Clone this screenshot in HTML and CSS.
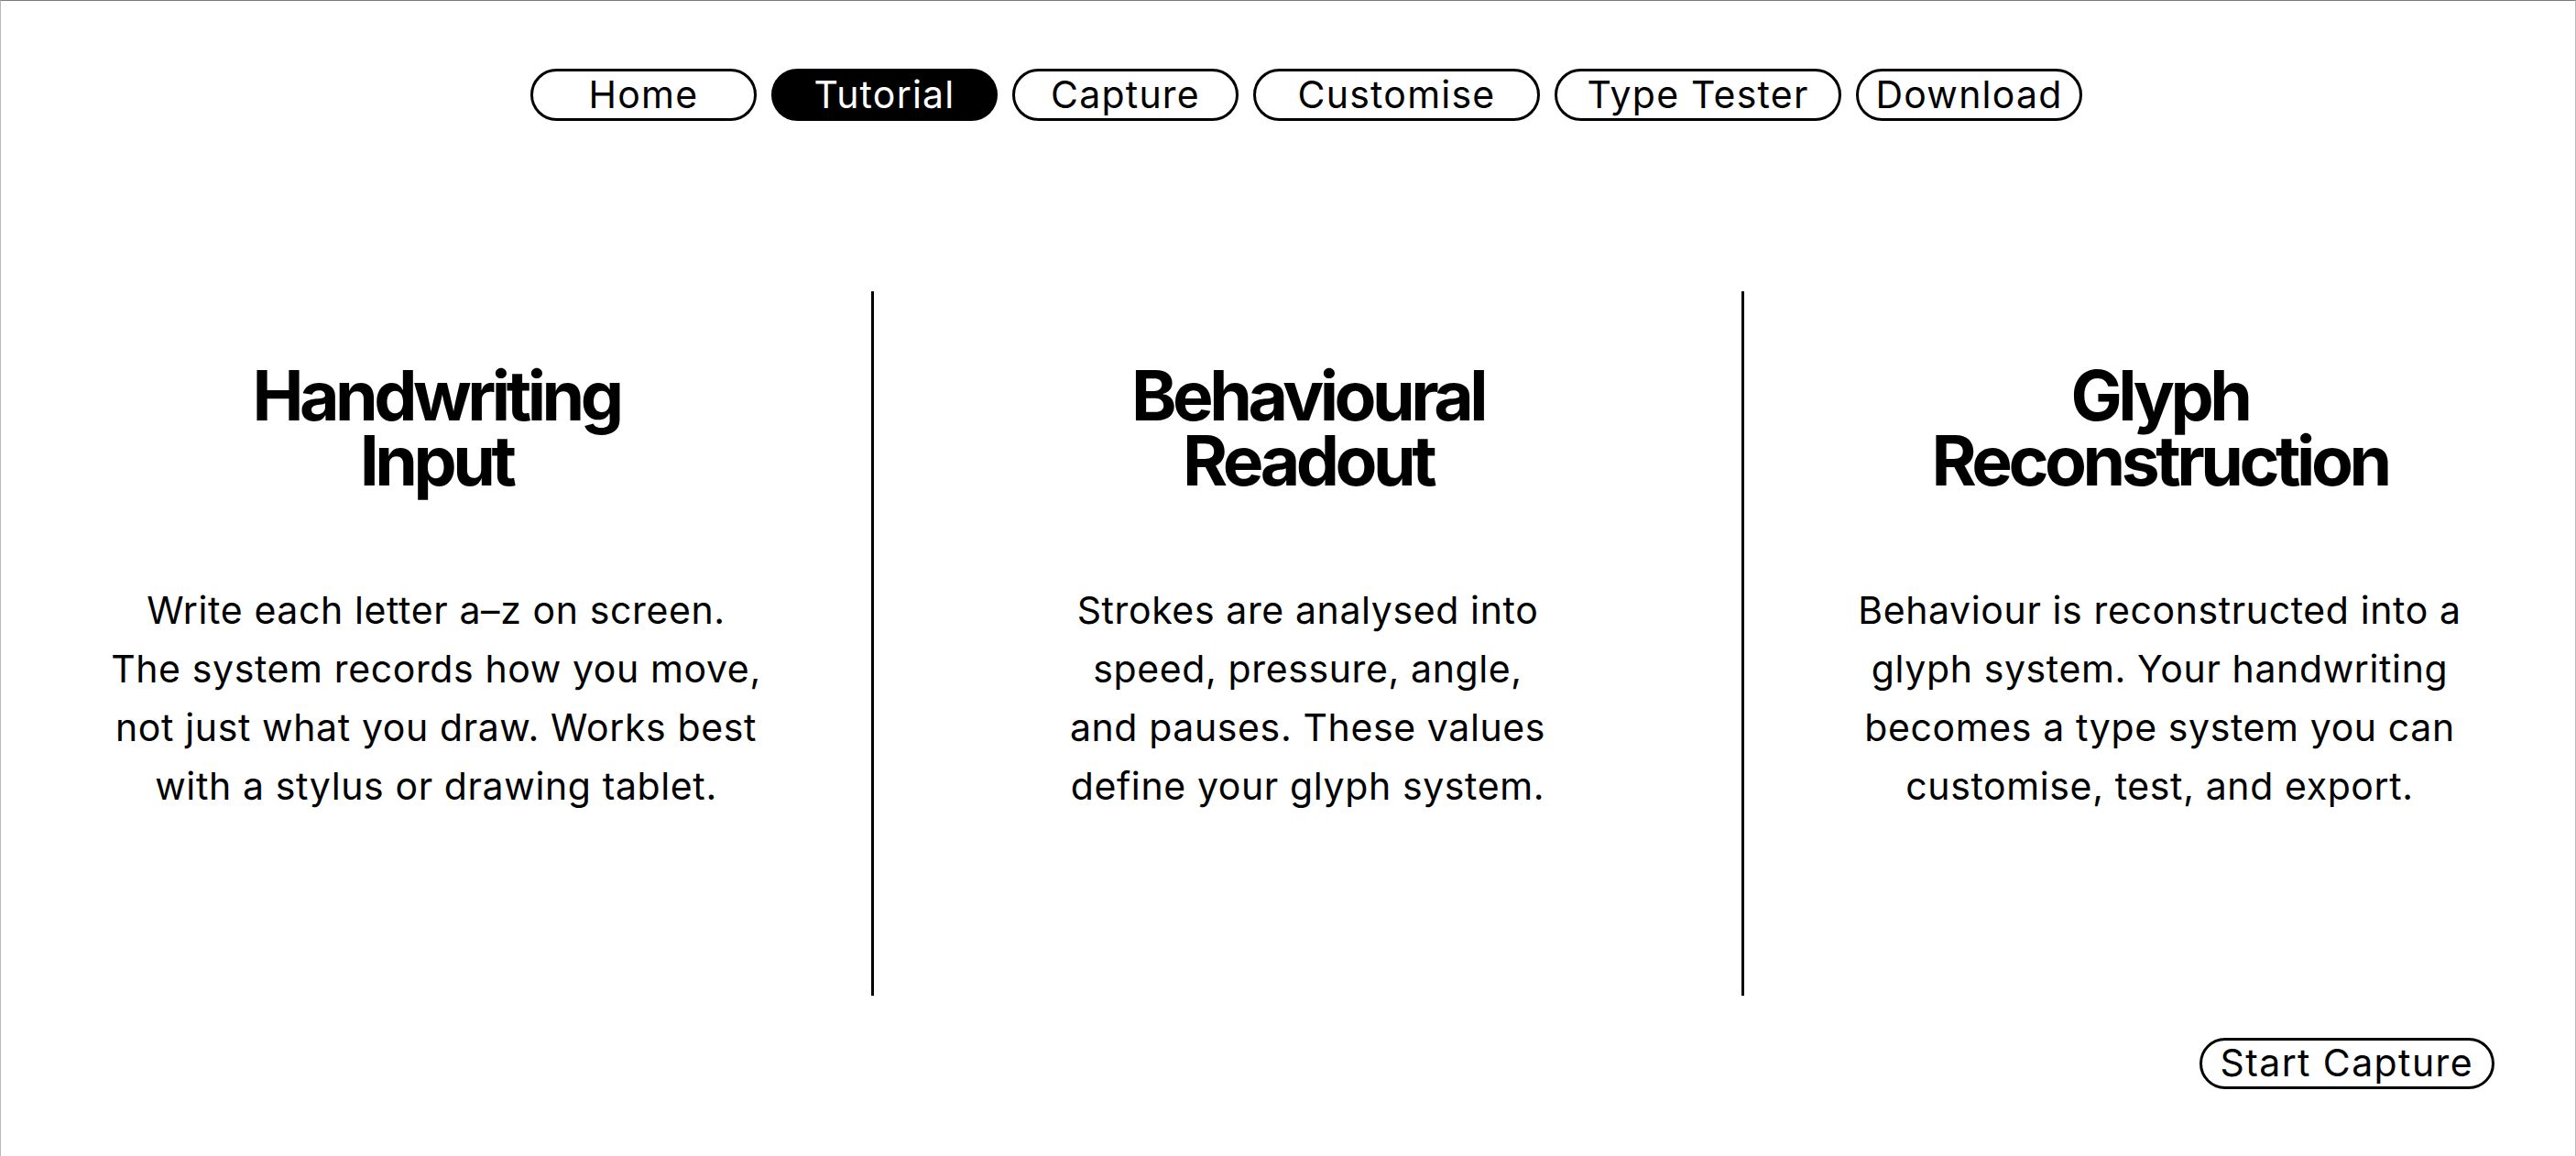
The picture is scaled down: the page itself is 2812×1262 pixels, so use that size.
FILE: index.html
```html
<!DOCTYPE html>
<html lang="en">
<head>
<meta charset="utf-8">
<title>Tutorial</title>
<link rel="stylesheet" href="styles.css">
</head>
<body>
<div class="frame">
  <nav class="nav">
    <a class="nav-btn">Home</a>
    <a class="nav-btn active">Tutorial</a>
    <a class="nav-btn">Capture</a>
    <a class="nav-btn wide">Customise</a>
    <a class="nav-btn wide">Type Tester</a>
    <a class="nav-btn">Download</a>
  </nav>
  <main class="steps">
    <section class="step">
      <h2 class="step-title"><span class="line">Handwriting</span><span class="line">Input</span></h2>
      <p class="step-text">Write each letter a–z on screen.<br>The system records how you move,<br>not just what you draw. Works best<br>with a stylus or drawing tablet.</p>
    </section>
    <section class="step">
      <h2 class="step-title"><span class="line">Behavioural</span><span class="line">Readout</span></h2>
      <p class="step-text">Strokes are analysed into<br>speed, pressure, angle,<br>and pauses. These values<br>define your glyph system.</p>
    </section>
    <section class="step">
      <h2 class="step-title"><span class="line">Glyph</span><span class="line">Reconstruction</span></h2>
      <p class="step-text">Behaviour is reconstructed into a<br>glyph system. Your handwriting<br>becomes a type system you can<br>customise, test, and export.</p>
    </section>
  </main>
  <div class="actions">
    <a class="start-btn">Start Capture</a>
  </div>
</div>
</body>
</html>
```

FILE: styles.css
```css
* { box-sizing: border-box; }
html, body { margin: 0; padding: 0; background: #fff; }
body {
  font-family: Inter, "Noto Sans", "Liberation Sans", sans-serif;
  color: #000;
}
.frame {
  min-height: 1262px;
  border-top: 1px solid #7a7a7a;
  border-left: 1px solid #b8b8b8;
  border-right: 1px solid #b8b8b8;
  overflow: hidden;
}
.nav {
  display: flex;
  justify-content: center;
  gap: 16px;
  padding: 74px 0 0 40px;
}
.nav-btn {
  display: block;
  width: 247px;
  height: 57px;
  border: 3px solid #000;
  border-radius: 30px;
  font-size: 41px;
  line-height: 51px;
  letter-spacing: 0.03em;
  text-align: center;
  color: #000;
  background: #fff;
}
.nav-btn.wide { width: 313px; }
.nav-btn.active { background: #000; color: #fff; }
.steps {
  display: grid;
  grid-template-columns: 950px 950px 1fr;
  margin-top: 186px;
  height: 769px;
}
.step {
  display: flex;
  flex-direction: column;
  align-items: center;
  text-align: center;
  padding-top: 78px;
}
.step + .step { border-left: 3px solid #000; }
.step-title {
  display: flex;
  flex-direction: column;
  align-items: center;
  margin: 0;
  font-size: 75px;
  font-weight: 700;
  letter-spacing: -0.06em;
}
.step-title .line {
  display: block;
  height: 71px;
  line-height: 72px;
}
.step-text {
  margin: 96px 0 0;
  font-size: 41px;
  line-height: 64px;
  letter-spacing: 0.015em;
}
.actions {
  display: flex;
  justify-content: flex-end;
  padding: 46px 88px 0 0;
}
.start-btn {
  display: block;
  height: 56px;
  padding: 0 20px;
  border: 3px solid #000;
  border-radius: 30px;
  font-size: 41px;
  line-height: 49px;
  letter-spacing: 0.034em;
  color: #000;
}
```
